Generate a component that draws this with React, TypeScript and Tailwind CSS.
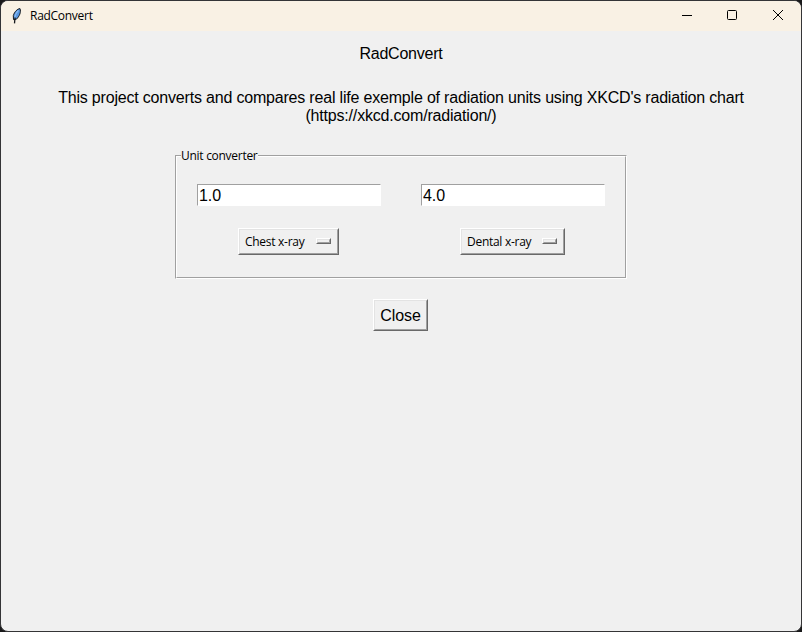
import type { ReactNode } from 'react';

const UI_FONT = "tracking-[-0.28px] font-['Open_Sans','Noto_Sans',sans-serif]";

function Raised({ className, children }: { className: string; children: ReactNode }) {
  return (
    <button
      type="button"
      className={`block border border-t-white border-l-white border-r-[#696969] border-b-[#696969] ${className}`}
    >
      <span className="flex h-full w-full items-center border border-t-[#e3e3e3] border-l-[#e3e3e3] border-r-[#a0a0a0] border-b-[#a0a0a0]">
        {children}
      </span>
    </button>
  );
}

function OptionMenu({ label, className }: { label: string; className: string }) {
  return (
    <Raised className={`h-[27px] ${className}`}>
      <span className={`grow pl-[5px] text-left text-[12px] leading-4 whitespace-nowrap ${UI_FONT}`}>{label}</span>
      <span className="mr-[6px] mb-px h-[6px] w-[15px] shrink-0 border border-t-white border-l-white border-r-[#696969] border-b-[#696969]">
        <span className="block h-full w-full border border-t-[#e3e3e3] border-l-[#e3e3e3] border-r-[#a0a0a0] border-b-[#a0a0a0]" />
      </span>
    </Raised>
  );
}

function Converter({ value, label, menuClass }: { value: string; label: string; menuClass: string }) {
  return (
    <div className="flex w-[184px] flex-col items-start gap-[22px]">
      <input
        defaultValue={value}
        className="h-[22px] w-[184px] border border-t-[#a0a0a0] border-l-[#a0a0a0] border-r-white border-b-white bg-white pt-[2px] pl-px text-[16px] leading-[18px] tracking-[-0.1px] outline-none"
      />
      <OptionMenu label={label} className={menuClass} />
    </div>
  );
}

function Feather() {
  return (
    <svg width="10" height="16" viewBox="0 0 10 16" fill="none">
      <path d="M8 0.6 C5.6 0.8 2.4 3.6 1.3 7.6 L1.5 11.6 L4.4 11.2 C7.4 8.4 9.3 4 8 0.6Z" fill="#5796e0" stroke="#16191d" strokeWidth="1" />
      <path d="M6.4 2.4 C4.6 4.2 3.4 6.6 2.9 9" stroke="#8fbdf2" strokeWidth="1.2" />
      <path d="M3.2 9.6 C2.8 11.4 2.6 13 2.5 15.4" stroke="#16191d" strokeWidth="1.3" />
    </svg>
  );
}

export default function App() {
  return (
    <div className="h-[632px] w-[802px] overflow-hidden bg-[#19191a] font-['Liberation_Sans',Arial,sans-serif] text-black">
      <div className="h-full w-full overflow-hidden rounded-[8px] border border-[#343436] bg-[#f0f0f0]">
        <header className="flex h-[30px] items-center bg-[#f9f1e4] pl-[11px]">
          <Feather />
          <span className={`ml-[8px] text-[12px] leading-4 ${UI_FONT}`}>RadConvert</span>
          <div className="ml-auto flex h-full items-center">
            <svg width="135" height="30" viewBox="0 0 135 30" fill="none" stroke="#000">
              <path d="M16 14.5H26" />
              <rect x="61.5" y="9.5" width="9" height="9" rx="1" />
              <path d="M107 9L117 19M117 9L107 19" />
            </svg>
          </div>
        </header>

        <main className="flex flex-col items-center pt-[14px] text-[16px] leading-[18px]">
          <h1 className="tracking-[-0.22px]">RadConvert</h1>
          <p className="mt-[26px] text-center tracking-[-0.19px] whitespace-nowrap">
            This project converts and compares real life exemple of radiation units using XKCD's radiation chart
            <br />
            (https://xkcd.com/radiation/)
          </p>

          <section className="mt-[30px] h-[124px] w-[452px] border border-t-[#a0a0a0] border-l-[#a0a0a0] border-r-white border-b-white">
            <div className="h-full w-full border border-t-white border-l-white border-r-[#a0a0a0] border-b-[#a0a0a0]">
              <h2
                className={`-mt-[9px] ml-[4px] h-4 w-[77px] bg-[#f0f0f0] text-[12px] leading-4 whitespace-nowrap ${UI_FONT}`}
              >
                Unit converter
              </h2>
              <div className="mt-[20px] flex gap-[40px] pl-[20px]">
                <Converter value="1.0" label="Chest x-ray" menuClass="ml-[41px] w-[101px]" />
                <Converter value="4.0" label="Dental x-ray" menuClass="ml-[39px] w-[105px]" />
              </div>
            </div>
          </section>

          <Raised className="mt-[20px] mr-px h-[32px] w-[55px]">
            <span className="w-full pt-px text-center tracking-[-0.1px]">Close</span>
          </Raised>
        </main>
      </div>
    </div>
  );
}
